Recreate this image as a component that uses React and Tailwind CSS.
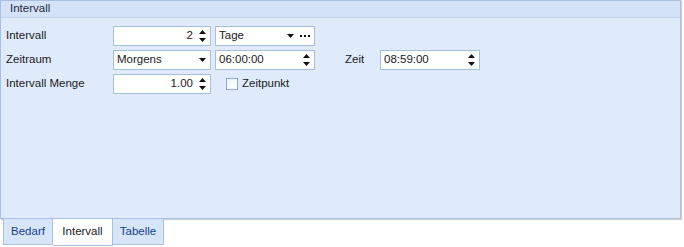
import React from "react";

const Up = () => (
  <svg width="7" height="4" viewBox="0 0 7 4"><path d="M3.5 0L7 4H0z" fill="#111" /></svg>
);
const Down = () => (
  <svg width="7" height="4" viewBox="0 0 7 4"><path d="M0 0H7L3.5 4z" fill="#111" /></svg>
);

function Spin({ value, align = "right", w = "w-[98px]" }) {
  return (
    <div className={`${w} h-[20px] bg-white border border-[#a7bedf] flex items-center`}>
      <span className={`flex-1 px-[3px] ${align === "right" ? "text-right" : "text-left"}`}>{value}</span>
      <div className="w-[14px] flex flex-col items-center justify-center gap-[4px] pr-[2px]">
        <Up />
        <Down />
      </div>
    </div>
  );
}

function Combo({ value, dots, w = "w-[98px]" }) {
  return (
    <div className={`${w} h-[20px] bg-white border border-[#a7bedf] flex items-center`}>
      <span className="flex-1 px-[3px]">{value}</span>
      <div className="w-[14px] flex items-center justify-center pr-[2px]"><Down /></div>
      {dots && (
        <div className="w-[16px] flex items-center justify-center gap-[2px] pr-[2px]">
          <span className="w-[2px] h-[2px] bg-[#111]" />
          <span className="w-[2px] h-[2px] bg-[#111]" />
          <span className="w-[2px] h-[2px] bg-[#111]" />
        </div>
      )}
    </div>
  );
}

export default function App() {
  return (
    <div className="w-[684px] h-[247px] bg-white text-[11.5px] text-[#1a1a1a] leading-none" style={{ fontFamily: '"Liberation Sans", Arial, sans-serif' }}>
      <div className="w-[681px] h-[219px] border border-[#a9c0e0] bg-[#dfeafb] shadow-[1px_1px_1px_rgba(0,0,0,0.18)] flex flex-col">
        <div className="h-[17px] bg-[#d3e2f7] border-b border-[#c3d5ef] flex items-center pl-[9px] text-[#1e2a3a]">
          Intervall
        </div>
        <div className="pt-[8px] pl-[5px] flex flex-col gap-[4px]">
          <div className="flex items-center h-[20px]">
            <span className="w-[107px]">Intervall</span>
            <Spin value="2" />
            <div className="w-[4px]" />
            <Combo value="Tage" dots w="w-[100px]" />
          </div>
          <div className="flex items-center h-[20px]">
            <span className="w-[107px]">Zeitraum</span>
            <Combo value="Morgens" />
            <div className="w-[4px]" />
            <Spin value="06:00:00" align="left" w="w-[100px]" />
            <span className="w-[65px] pl-[30px]">Zeit</span>
            <Spin value="08:59:00" align="left" w="w-[100px]" />
          </div>
          <div className="flex items-center h-[20px]">
            <span className="w-[107px]">Intervall Menge</span>
            <Spin value="1.00" />
            <div className="w-[15px]" />
            <div className="w-[12px] h-[12px] border border-[#8fa9cf] bg-gradient-to-br from-[#eef3fb] to-white" />
            <span className="pl-[4px]">Zeitpunkt</span>
          </div>
        </div>
      </div>
      <div className="flex items-start pl-[3px]">
        <div className="h-[26px] w-[50px] justify-center flex items-center bg-[#d6e5f8] border border-t-0 border-[#a9c0e0] text-[#15428b]">Bedarf</div>
        <div className="h-[27px] w-[60px] justify-center flex items-center bg-white border border-t-0 border-l-0 border-[#a9c0e0]">Intervall</div>
        <div className="h-[26px] w-[51px] justify-center flex items-center bg-[#d6e5f8] border border-t-0 border-l-0 border-[#a9c0e0] text-[#15428b]">Tabelle</div>
      </div>
    </div>
  );
}
